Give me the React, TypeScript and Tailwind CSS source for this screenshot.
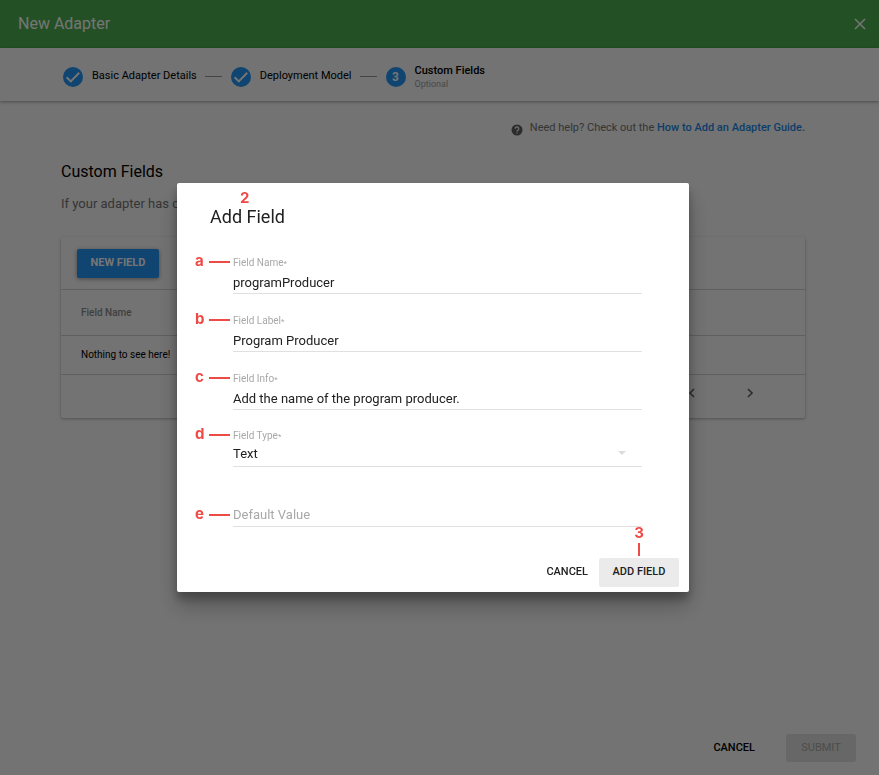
import React from "react";

function CheckCircle() {
  return (
    <svg className="h-5 w-5 shrink-0" viewBox="0 0 20 20" aria-hidden="true">
      <circle cx="10" cy="10" r="10" fill="#2196f3" />
      <path d="M3.6 10.2l4.2 4.2 8.4-8.6" fill="none" stroke="#fff" strokeWidth="2" />
    </svg>
  );
}

function Connector() {
  return <span className="mr-[9px] ml-2 h-px w-[17px] bg-[#9a9a9a]" />;
}

function Callout({ letter }: { letter: string }) {
  return (
    <span className="absolute right-full -top-px mr-[3px] flex h-4 w-[35px] items-center justify-between font-['Inter',sans-serif] text-[15px] leading-4 font-bold text-[#ef4b46]">
      <span className="-mt-0.5">{letter}</span>
      <span className="h-0.5 w-[21px] bg-[#ef4b46]" />
    </span>
  );
}

function FieldLabel({ id, text }: { id: string; text: string }) {
  return (
    <label htmlFor={id} className="h-4 text-[10px] leading-4 text-[#a8a8a8]">
      {text}
      <span className="text-[8px] leading-none">*</span>
    </label>
  );
}

function TextField({ id, label, value, letter }: { id: string; label: string; value: string; letter: string }) {
  return (
    <div className="relative flex flex-col">
      <Callout letter={letter} />
      <FieldLabel id={id} text={label} />
      <input
        id={id}
        defaultValue={value}
        className="h-[23px] w-full border-b border-[#e0e0e0] text-[13px] leading-5 text-[#212121] outline-none"
      />
    </div>
  );
}

function AddFieldDialog() {
  return (
    <div className="fixed inset-0 flex items-center justify-center bg-black/54 pr-[13px]">
      <div
        role="dialog"
        aria-labelledby="dialog-title"
        className="w-full max-w-[512px] rounded-xs bg-white pb-[5px] shadow-[0_7px_9px_rgba(0,0,0,0.25),0_14px_22px_rgba(0,0,0,0.25)]"
      >
        <form onSubmit={(e) => e.preventDefault()}>
          <div className="relative pt-[22px] pl-[33px]">
            <span className="absolute top-[7px] left-[63px] font-['Inter',sans-serif] text-[15px] leading-4 font-bold text-[#ef4b46]">
              2
            </span>
            <h2 id="dialog-title" className="text-[18px] leading-6 text-[#212121]">
              Add Field
            </h2>
          </div>
          <div className="pt-[26px] pr-[47px] pl-14">
            <div className="flex flex-col gap-[19px]">
              <TextField id="name" label="Field Name" value="programProducer" letter="a" />
              <TextField id="label" label="Field Label" value="Program Producer" letter="b" />
              <TextField id="info" label="Field Info" value="Add the name of the program producer." letter="c" />
            </div>
            <div className="relative mt-[18px] flex flex-col">
              <Callout letter="d" />
              <FieldLabel id="type" text="Field Type" />
              <select
                id="type"
                className="h-[23px] w-full appearance-none border-b border-[#e0e0e0] pb-0.5 text-[13px] leading-5 text-[#212121] outline-none"
              >
                <option>Text</option>
              </select>
              <svg className="pointer-events-none absolute right-4 bottom-3 h-1 w-2" viewBox="0 0 8 4" aria-hidden="true">
                <path d="M0 0h8L4 4z" fill="#dcdcdc" />
              </svg>
            </div>
            <div className="relative mt-[35px]">
              <div className="absolute inset-x-0 top-1.5">
                <Callout letter="e" />
              </div>
              <input
                aria-label="Default Value"
                placeholder="Default Value"
                className="block h-[25px] w-full border-b border-[#e0e0e0] text-[13px] leading-5 outline-none placeholder:text-[#a8a8a8]"
              />
            </div>
          </div>
          <div className="mt-[31px] flex justify-end pr-2.5 text-[11px] font-medium text-[#212121]">
            <button type="button" className="h-[29px] px-[11px]">
              CANCEL
            </button>
            <div className="relative">
              <span className="absolute inset-x-0 bottom-full flex flex-col items-center font-['Inter',sans-serif] text-[15px] leading-4 font-bold text-[#ef4b46]">
                3
                <span className="mt-0.5 mb-0.5 h-[13px] w-0.5 bg-[#ef4b46]" />
              </span>
              <button type="submit" className="h-[29px] w-20 rounded-xs bg-[#ebebeb]">
                ADD FIELD
              </button>
            </div>
          </div>
        </form>
      </div>
    </div>
  );
}

export default function App() {
  return (
    <div className="flex min-h-screen flex-col bg-[#fafafa] font-['Roboto',sans-serif] text-[#212121]">
      <header className="flex h-12 items-center justify-between bg-[#4caf50] pr-3 pl-[18px] text-white">
        <h1 className="text-[16px] leading-6">New Adapter</h1>
        <button type="button" aria-label="Close">
          <svg className="h-[14px] w-[14px]" viewBox="0 0 14 14" aria-hidden="true">
            <path d="M2 2l10 10M12 2L2 12" stroke="#fff" strokeWidth="1.5" fill="none" />
          </svg>
        </button>
      </header>

      <nav className="flex h-[53px] items-center bg-[#fafafa] pt-1 pl-[63px] text-[11px] text-black shadow-[0_1px_3px_rgba(0,0,0,0.35)]">
        <CheckCircle />
        <span className="ml-[9px]">Basic Adapter Details</span>
        <Connector />
        <CheckCircle />
        <span className="ml-[9px]">Deployment Model</span>
        <Connector />
        <span className="flex h-5 w-5 items-center justify-center rounded-full bg-[#2196f3] text-[12px] font-bold text-white">3</span>
        <span className="ml-[9px] flex flex-col">
          <span className="leading-[14px] font-medium">Custom Fields</span>
          <span className="text-[9px] leading-3 text-[#a0a0a0]">Optional</span>
        </span>
      </nav>

      <main className="flex-1 pr-[74px] pl-[61px]">
        <p className="flex items-center justify-end pt-[17px] text-[11px] leading-5 text-[#757575]">
          <svg className="mt-1 mr-[7px] h-3 w-3" viewBox="0 0 12 12" aria-hidden="true">
            <circle cx="6" cy="6" r="5.5" fill="#616161" />
            <path d="M4.2 4.7a1.8 1.8 0 1 1 2.7 1.5c-.6.4-.9.6-.9 1.3M6 8.4v1.2" fill="none" stroke="#fafafa" strokeWidth="1.2" />
          </svg>
          <span>
            Need help? Check out the{" "}
            <a href="#guide" className="font-medium text-[#1e88e5]">
              How to Add an Adapter Guide.
            </a>
          </span>
        </p>
        <h2 className="mt-[22px] text-[16px] leading-6 text-black">Custom Fields</h2>
        <p className="mt-[10px] text-[13px] leading-5 text-[#757575]">If your adapter has custom fields, add them here.</p>

        <section className="mt-[23px] rounded-xs bg-[#fafafa] shadow-[0_1px_3px_rgba(0,0,0,0.3)]">
          <div className="flex h-[53px] items-center border-b border-[#d0d0d0] pl-4">
            <button
              type="button"
              className="h-[29px] w-[82px] rounded-xs bg-[#2196f3] text-[11px] font-bold text-white shadow-[0_1px_4px_rgba(0,0,0,0.4)]"
            >
              NEW FIELD
            </button>
          </div>
          <table className="w-full text-left">
            <thead>
              <tr className="h-[45px] border-b border-[#d0d0d0]">
                <th className="pl-5 text-[10px] font-medium text-[#8c8c8c]">Field Name</th>
              </tr>
            </thead>
            <tbody>
              <tr className="h-[39px] border-b border-[#d0d0d0]">
                <td className="pl-5 text-[10px] text-black">Nothing to see here!</td>
              </tr>
            </tbody>
          </table>
          <div className="flex h-[43px] items-start justify-end gap-[46px] pt-3 pr-[49px]">
            <button type="button" aria-label="Previous page">
              <svg className="h-3 w-3" viewBox="0 0 12 12" aria-hidden="true">
                <path d="M8 2L4 6l4 4" fill="none" stroke="#616161" strokeWidth="1.6" />
              </svg>
            </button>
            <button type="button" aria-label="Next page">
              <svg className="h-3 w-3" viewBox="0 0 12 12" aria-hidden="true">
                <path d="M4 2l4 4-4 4" fill="none" stroke="#616161" strokeWidth="1.6" />
              </svg>
            </button>
          </div>
        </section>
      </main>

      <footer className="flex items-center justify-end gap-5 pr-[23px] pb-[13px] text-[11px] font-medium text-black">
        <button type="button" className="h-7 px-[11px]">
          CANCEL
        </button>
        <button type="button" disabled className="h-7 w-[70px] rounded-xs bg-[#e0e0e0] font-normal text-[#a8a8a8]">
          SUBMIT
        </button>
      </footer>

      <AddFieldDialog />
    </div>
  );
}
